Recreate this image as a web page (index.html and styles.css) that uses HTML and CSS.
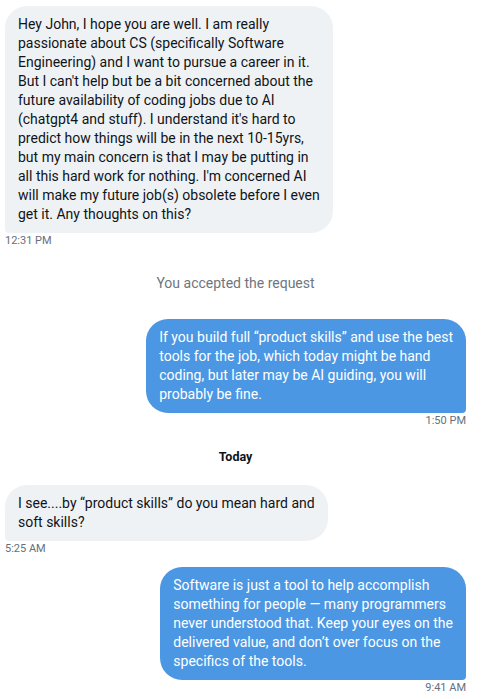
FILE: index.html
```html
<!DOCTYPE html>
<html>
<head>
    <title>Messages</title>
    <link rel="stylesheet" href="styles.css">
</head>
<body>

<div class="chat">
    <div class="msg received">
        <div class="bubble">Hey John, I hope you are well. I am really<br>passionate about CS (specifically Software<br>Engineering) and I want to pursue a career in it.<br>But I can't help but be a bit concerned about the<br>future availability of coding jobs due to AI<br>(chatgpt4 and stuff). I understand it's hard to<br>predict how things will be in the next 10-15yrs,<br>but my main concern is that I may be putting in<br>all this hard work for nothing. I'm concerned AI<br>will make my future job(s) obsolete before I even<br>get it. Any thoughts on this?</div>
        <div class="time">12:31 PM</div>
    </div>

    <div class="notice">You accepted the request</div>

    <div class="msg sent">
        <div class="bubble">If you build full “product skills” and use the best<br>tools for the job, which today might be hand<br>coding, but later may be AI guiding, you will<br>probably be fine.</div>
        <div class="time">1:50 PM</div>
    </div>

    <div class="day">Today</div>

    <div class="msg received">
        <div class="bubble">I see....by “product skills” do you mean hard and<br>soft skills?</div>
        <div class="time">5:25 AM</div>
    </div>

    <div class="msg sent last">
        <div class="bubble">Software is just a tool to help accomplish<br>something for people — many programmers<br>never understood that. Keep your eyes on the<br>delivered value, and don’t over focus on the<br>specifics of the tools.</div>
        <div class="time">9:41 AM</div>
    </div>
</div>

</body>
</html>
```

FILE: styles.css
```css
body {
    margin: 0;
    background: #ffffff;
    font-family: Roboto, "Liberation Sans", sans-serif;
    color: #0f1419;
}

.chat {
    padding: 6px 17px 0 5px;
    display: flex;
    flex-direction: column;
}

.msg {
    display: flex;
    flex-direction: column;
}

.msg.received {
    align-items: flex-start;
}

.msg.sent {
    align-items: flex-end;
}

.bubble {
    font-size: 14px;
    line-height: 19px;
    padding: 9px 13px;
    border-radius: 22px;
    width: fit-content;
}

.received .bubble {
    background-color: #eff2f4;
    border-bottom-left-radius: 4px;
}

.sent .bubble {
    background-color: #4b97e3;
    color: #ffffff;
    border-bottom-right-radius: 4px;
}

.time {
    font-size: 11px;
    line-height: 16px;
    color: #66707a;
}

.notice {
    text-align: center;
    font-size: 14px;
    line-height: 20px;
    color: #6e767d;
    margin: 24px 0 26px;
}

.day {
    text-align: center;
    font-size: 12.5px;
    font-weight: bold;
    line-height: 20px;
    margin: 18px 0 18px;
}

.msg.sent.last {
    margin-top: 10px;
}
```
